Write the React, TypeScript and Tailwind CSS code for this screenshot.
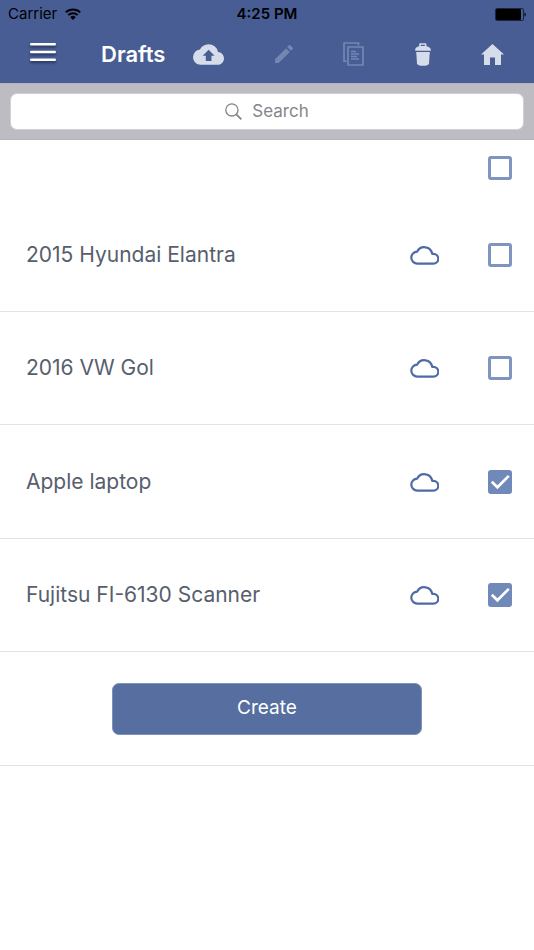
import { useState } from "react";

type Draft = { id: string; name: string; checked: boolean };

const initialDrafts: Draft[] = [
  { id: "elantra", name: "2015 Hyundai Elantra", checked: false },
  { id: "gol", name: "2016 VW Gol", checked: false },
  { id: "laptop", name: "Apple laptop", checked: true },
  { id: "scanner", name: "Fujitsu FI-6130 Scanner", checked: true },
];

function StatusBar() {
  return (
    <div className="grid h-7 grid-cols-3 items-center px-2 text-[15px] text-black">
      <div className="flex items-center gap-2">
        <span>Carrier</span>
        <svg className="h-3 w-4" viewBox="0 0 16 12" aria-hidden="true">
          <g fill="none" stroke="currentColor" strokeWidth="2">
            <path d="M0.8 4.4a10.2 10.2 0 0 1 14.4 0" />
            <path d="M3.3 7.1a6.6 6.6 0 0 1 9.4 0" />
          </g>
          <path d="M5.3 9.2a3.8 3.8 0 0 1 5.4 0L8 11.9z" fill="currentColor" />
        </svg>
      </div>
      <div className="text-center font-semibold">4:25 PM</div>
      <svg className="h-[13px] w-[31px] justify-self-end" viewBox="0 0 31 13" aria-hidden="true">
        <rect x="0.5" y="0.5" width="28" height="12" rx="1.5" fill="none" stroke="#1c2540" />
        <rect x="1" y="1" width="25" height="11" rx="1" fill="#000" />
        <path d="M29.5 4.5c1.6.3 1.6 3.7 0 4z" fill="#000" />
      </svg>
    </div>
  );
}

function Toolbar() {
  return (
    <div className="flex h-[55px] items-center pr-[30px] pb-[3px] pl-[30px]">
      <button type="button" aria-label="Menu" className="text-white">
        <svg className="h-6 w-[26px] drop-shadow-[0_2px_1px_rgba(20,28,55,0.6)]" viewBox="0 0 26 24" aria-hidden="true">
          <path d="M1.2 2.300h23.600M1.2 10h23.600M1.2 17.700h23.600" stroke="currentColor" strokeWidth="2.4" strokeLinecap="round" />
        </svg>
      </button>
      <h1 className="ml-[45px] text-[22px] font-semibold text-white">Drafts</h1>
      <div className="ml-7 flex flex-1 items-center justify-between text-[#d5dcea]">
        <button type="button" aria-label="Upload">
          <svg className="h-[21px] w-[31px]" viewBox="0 4 24 16" aria-hidden="true">
            <path
              fill="currentColor"
              fillRule="evenodd"
              d="M19.35 10.04A7.49 7.49 0 0 0 12 4C9.11 4 6.6 5.64 5.35 8.04A5.994 5.994 0 0 0 0 14c0 3.31 2.69 6 6 6h13c2.76 0 5-2.24 5-5 0-2.64-2.05-4.78-4.65-4.96zM14.3 13v4h-4.4v-4H7.5l4.6-4.7 4.6 4.7z"
            />
          </svg>
        </button>
        <button type="button" aria-label="Edit" disabled className="text-[#7486b2]">
          <svg className="h-[18px] w-[18px]" viewBox="3 3 18 18" aria-hidden="true">
            <path
              fill="currentColor"
              d="M3 17.25V21h3.75L17.81 9.94l-3.75-3.75L3 17.25zM20.71 7.04a.996.996 0 0 0 0-1.41l-2.34-2.34a.996.996 0 0 0-1.41 0l-1.83 1.83 3.75 3.75 1.83-1.83z"
            />
          </svg>
        </button>
        <button type="button" aria-label="Copy" disabled className="text-[#7486b2]">
          <svg className="h-6 w-[21px]" viewBox="0 0 21 24" fill="none" stroke="currentColor" aria-hidden="true">
            <path d="M3.6 19.2H1V1h14.5v2.4" strokeWidth="1.7" />
            <path d="M5 5h15v18H5z" strokeWidth="1.7" />
            <path d="M8 9.5h5M8 12h8M8 14.5h6M8 17h8" strokeWidth="1.3" />
          </svg>
        </button>
        <button type="button" aria-label="Delete">
          <svg className="h-[23px] w-4" viewBox="0 0 16 23" fill="currentColor" aria-hidden="true">
            <path
              fillRule="evenodd"
              d="M4.2 3.3V1.2C4.2.5 4.6.2 5.2.2h5.2c.6 0 1 .3 1 1v2.1c2.4.6 4.4 1.8 4.4 3.3v1.1H.2V6.6c0-1.5 1.7-2.7 4-3.3zM5.8 1.8v1.3h4V1.8z"
            />
            <path d="M1.2 9h13.6l-.8 11.4c-.3 1.5-2.6 2.4-6 2.4s-5.7-.9-6-2.4z" />
          </svg>
        </button>
        <button type="button" aria-label="Home">
          <svg className="h-[21px] w-[23px]" viewBox="0 0 23 21" fill="currentColor" aria-hidden="true">
            <path d="M11.5 0 23 10.5h-3V21h-6v-7.5H9V21H3V10.5H0z" />
          </svg>
        </button>
      </div>
    </div>
  );
}

function SearchBar() {
  return (
    <div className="border-y border-[#b4b3ba] bg-[#bdbcc2] px-[10px] py-[9px]">
      <label className="flex h-[37px] items-center justify-center gap-[10px] rounded-[7px] border border-[#d0cfd4] bg-white text-[#85858b]">
        <svg className="h-[17px] w-[17px]" viewBox="0 0 17 17" fill="none" stroke="currentColor" aria-hidden="true">
          <circle cx="6.9" cy="6.9" r="6.1" strokeWidth="1.3" />
          <path d="m11.3 11.3 5 5" strokeWidth="1.8" />
        </svg>
        <input
          type="search"
          aria-label="Search"
          placeholder="Search"
          className="field-sizing-content text-[17px] outline-none placeholder:text-[#85858b]"
        />
      </label>
    </div>
  );
}

function Checkbox({ label, checked, onChange }: { label: string; checked: boolean; onChange: () => void }) {
  return (
    <label className="grid h-6 w-6 shrink-0 place-items-center">
      <input
        type="checkbox"
        aria-label={label}
        checked={checked}
        onChange={onChange}
        className="col-start-1 row-start-1 h-6 w-6 appearance-none rounded-[3px] border-[3px] border-[#7f95c0] bg-white checked:border-[#7189b8] checked:bg-[#7189b8]"
      />
      {checked && (
        <svg className="pointer-events-none z-10 col-start-1 row-start-1 h-6 w-6" viewBox="0 0 24 24" aria-hidden="true">
          <path d="m3.8 11.8 5.600 5.500L20.800 5.900" fill="none" stroke="#fff" strokeWidth="2.700" />
        </svg>
      )}
    </label>
  );
}

function CloudIcon() {
  return (
    <svg className="h-5 w-[29px] shrink-0" viewBox="0 0 29 20" aria-hidden="true">
      <path
        d="M7.400 18.600h16a4.900 4.900 0 0 0 0-9.800h-1.200A8 8 0 0 0 7.200 6.600 6 6 0 0 0 7.400 18.600z"
        fill="none"
        stroke="#4e6ba5"
        strokeWidth="2.2"
        strokeLinejoin="round"
      />
    </svg>
  );
}

export default function App() {
  const [drafts, setDrafts] = useState(initialDrafts);
  const allChecked = drafts.every((d) => d.checked);

  const toggle = (id: string) =>
    setDrafts((list) => list.map((d) => (d.id === id ? { ...d, checked: !d.checked } : d)));
  const toggleAll = () => setDrafts((list) => list.map((d) => ({ ...d, checked: !allChecked })));

  return (
    <div className="min-h-screen bg-white font-[Inter,'Liberation_Sans',sans-serif]">
      <header className="bg-[#475d94]">
        <StatusBar />
        <Toolbar />
      </header>
      <SearchBar />
      <main>
        <div className="flex h-[58px] items-center justify-end px-[22px] pb-0.5">
          <Checkbox label="Select all drafts" checked={allChecked} onChange={toggleAll} />
        </div>
        <ul>
          {drafts.map((draft) => (
            <li
              key={draft.id}
              className="flex items-center border-b border-[#dfe3ec] pr-[22px] pl-[26px] odd:h-[114px] even:h-[113px]"
            >
              <span className="flex-1 text-[21px] text-[#575e6d]">{draft.name}</span>
              <CloudIcon />
              <div className="ml-[49px] flex">
                <Checkbox label={draft.name} checked={draft.checked} onChange={() => toggle(draft.id)} />
              </div>
            </li>
          ))}
        </ul>
        <div className="flex h-[114px] items-center justify-center border-b border-[#dfe3ec]">
          <button type="button" className="h-[52px] w-[58%] rounded-[7px] border border-[#7f93ba] bg-[#566fa0] text-[19px] text-white">
            Create
          </button>
        </div>
      </main>
    </div>
  );
}
